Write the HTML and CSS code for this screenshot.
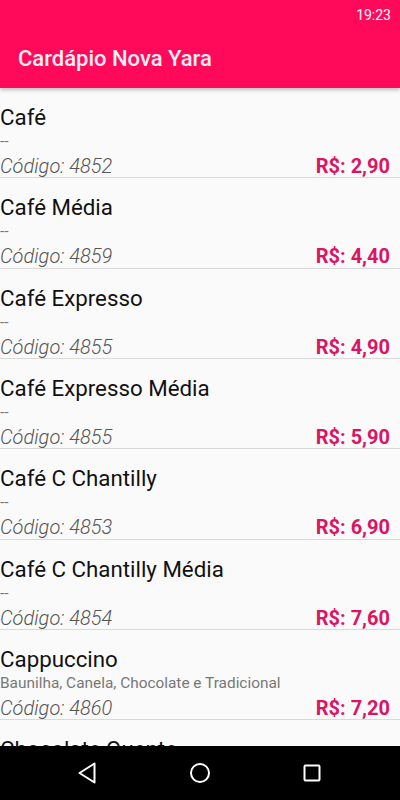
FILE: index.html
```html
<!DOCTYPE html>
<html lang="pt-BR">
<head>
<meta charset="utf-8">
<title>Cardápio Nova Yara</title>
<link rel="stylesheet" href="styles.css">
</head>
<body>
<div class="screen">
  <header class="appbar">
    <div class="statusbar"><span class="time">19:23</span></div>
    <div class="toolbar"><h1 class="title">Cardápio Nova Yara</h1></div>
  </header>
  <main class="list">
    <div class="item">
      <div class="name">Café</div>
      <div class="desc">--</div>
      <div class="meta"><span class="code">Código: 4852</span><span class="price">R$: 2,90</span></div>
    </div>
    <div class="item">
      <div class="name">Café Média</div>
      <div class="desc">--</div>
      <div class="meta"><span class="code">Código: 4859</span><span class="price">R$: 4,40</span></div>
    </div>
    <div class="item">
      <div class="name">Café Expresso</div>
      <div class="desc">--</div>
      <div class="meta"><span class="code">Código: 4855</span><span class="price">R$: 4,90</span></div>
    </div>
    <div class="item">
      <div class="name">Café Expresso Média</div>
      <div class="desc">--</div>
      <div class="meta"><span class="code">Código: 4855</span><span class="price">R$: 5,90</span></div>
    </div>
    <div class="item">
      <div class="name">Café C Chantilly</div>
      <div class="desc">--</div>
      <div class="meta"><span class="code">Código: 4853</span><span class="price">R$: 6,90</span></div>
    </div>
    <div class="item">
      <div class="name">Café C Chantilly Média</div>
      <div class="desc">--</div>
      <div class="meta"><span class="code">Código: 4854</span><span class="price">R$: 7,60</span></div>
    </div>
    <div class="item">
      <div class="name">Cappuccino</div>
      <div class="desc">Baunilha, Canela, Chocolate e Tradicional</div>
      <div class="meta"><span class="code">Código: 4860</span><span class="price">R$: 7,20</span></div>
    </div>
    <div class="item">
      <div class="name">Chocolate Quente</div>
      <div class="desc">--</div>
      <div class="meta"><span class="code">Código: 4861</span><span class="price">R$: 6,50</span></div>
    </div>
  </main>
  <nav class="navbar">
    <svg class="nav-icon" width="24" height="24" viewBox="0 0 24 24"><path d="M18.5 2.5 L3.5 12 L18.5 21.5 Z" fill="none" stroke="#fff" stroke-width="2" stroke-linejoin="round"/></svg>
    <svg class="nav-icon" width="24" height="24" viewBox="0 0 24 24"><circle cx="12" cy="12" r="9" fill="none" stroke="#fff" stroke-width="2"/></svg>
    <svg class="nav-icon" width="24" height="24" viewBox="0 0 24 24"><rect x="4.5" y="4.5" width="15" height="15" rx="1" fill="none" stroke="#fff" stroke-width="2"/></svg>
  </nav>
</div>
</body>
</html>
```
FILE: styles.css
```css
* { box-sizing: border-box; }
html, body { margin: 0; padding: 0; }
body {
  font-family: Roboto, "Noto Sans", "Liberation Sans", sans-serif;
  background: #fafafa;
}
.screen {
  width: 400px;
  height: 800px;
  display: flex;
  flex-direction: column;
  overflow: hidden;
}
.appbar {
  background: #ff0a5a;
  height: 88px;
  flex: none;
  box-shadow: 0 2px 4px rgba(0,0,0,0.25);
  position: relative;
  z-index: 2;
}
.statusbar {
  height: 28px;
  display: flex;
  justify-content: flex-end;
  align-items: center;
  padding: 2px 9px 0 0;
}
.time {
  color: #fff;
  font-size: 14px;
  font-weight: 400;
}
.toolbar {
  height: 60px;
  display: flex;
  align-items: center;
  padding: 0 0 0 18px;
}
.title {
  margin: 0;
  color: #fdeef3;
  font-size: 22px;
  font-weight: 500;
}
.list {
  flex: 1;
  overflow: hidden;
  background: #fafafa;
}
.item {
  padding: 18px 10px 0 0;
  border-bottom: 1px solid #d9d9d9;
}
.name {
  font-size: 22.3px;
  line-height: 22px;
  color: #111;
}
.desc {
  font-size: 15.4px;
  line-height: 27.07px;
  color: #777;
}
.meta {
  display: flex;
  justify-content: space-between;
  align-items: baseline;
  font-size: 20px;
  line-height: 22.26px;
}
.code {
  font-style: italic;
  font-weight: 300;
  color: #555;
}
.price {
  font-weight: 700;
  color: #dc1464;
}
.navbar {
  height: 54px;
  flex: none;
  background: #000;
  display: flex;
  align-items: center;
  justify-content: center;
  gap: 88px;
}
.nav-icon { display: block; }
```
